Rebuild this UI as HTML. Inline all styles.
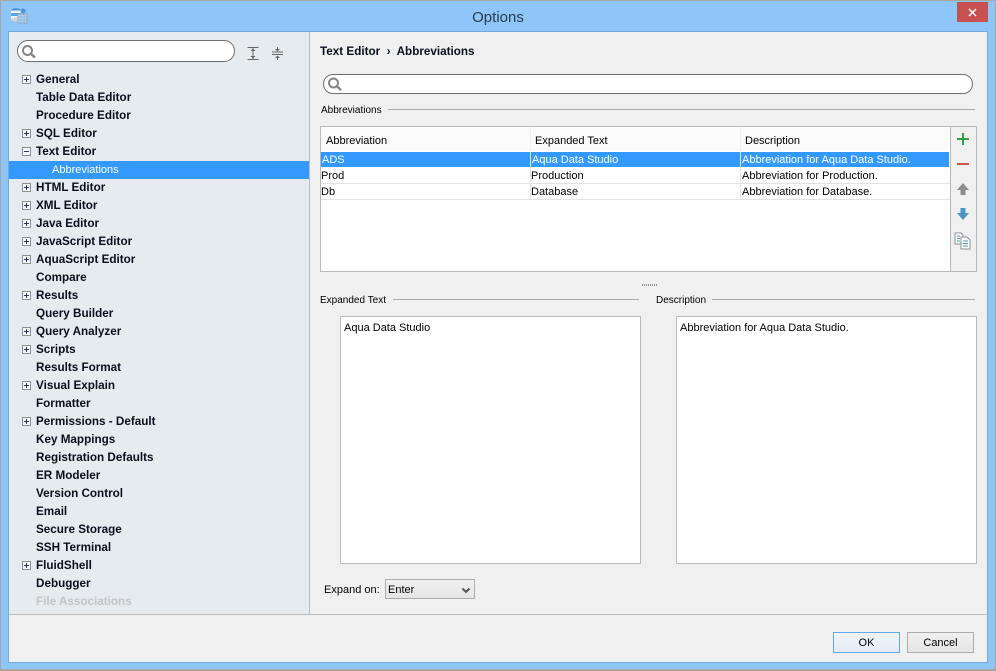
<!DOCTYPE html>
<html><head><meta charset="utf-8"><title>Options</title>
<style>
html,body{margin:0;padding:0;width:996px;height:671px;overflow:hidden;background:#8fc6f9;font-family:"Liberation Sans",sans-serif;font-size:11px;color:#000}
div,span,svg{position:absolute;box-sizing:border-box}
.t{white-space:nowrap;line-height:16px;height:16px;margin-top:1px}
.b{font-weight:bold;left:36px;font-size:11.7px;color:#07101c}
.bx{left:22px;width:9px;height:9px;border:1px solid #8a8f96;background:#f4f6f8}
.bx:before{content:"";position:absolute;left:1px;top:3px;width:5px;height:1px;background:#2a3a66}
.bx.p:after{content:"";position:absolute;left:3px;top:1px;width:1px;height:5px;background:#2a3a66}
.line{height:1px;background:#a8a8a8}
.ta{background:#fff;border:1px solid #b9b9b9}
</style></head><body>
<div style="left:0;top:0;width:996px;height:671px;border:1px solid #a5a5a5;border-bottom-width:2px"></div>
<svg style="left:10px;top:7px" width="18" height="18" viewBox="0 0 18 18"><ellipse cx="6" cy="3.5" rx="5" ry="2.2" fill="#3d8fd8"/><rect x="1" y="3.5" width="10" height="9" fill="#f2f6fa"/><rect x="1" y="6" width="10" height="3" fill="#5aa6e6"/><ellipse cx="6" cy="12.5" rx="5" ry="2" fill="#cfd8e0"/><circle cx="13" cy="4" r="2.5" fill="#4a96dc"/><rect x="8" y="7" width="9" height="9" fill="#b9d4ea" stroke="#8fa4b4"/><path d="M8 10h9M8 13h9M11 7v9M14 7v9" stroke="#7fb2dc" stroke-width=".7"/></svg>
<div class="t" style="left:0;top:8px;width:996px;text-align:center;font-size:15px;line-height:18px;height:18px;color:#2b3a4a">Options</div>
<div style="left:957px;top:2px;width:31px;height:20px;background:#c75050"></div>
<svg style="left:968px;top:8px" width="9" height="9" viewBox="0 0 9 9"><path d="M1 1l7 7M8 1l-7 7" stroke="#fff" stroke-width="1.5"/></svg>

<div style="left:8px;top:31px;width:980px;height:632px;background:#f0f0f0;border:1px solid #74a9da"></div>
<div style="left:9px;top:32px;width:301px;height:583px;background:#e6ebf0;border-right:1px solid #bcbcbc"></div>
<div class="line" style="left:9px;top:614px;width:978px;background:#bcbcbc"></div>

<div style="left:17px;top:40px;width:218px;height:22px;background:#fff;border:1px solid #6e6e6e;border-radius:11px"></div>
<svg style="left:21px;top:44px" width="15" height="15" viewBox="0 0 15 15"><circle cx="6.500" cy="6.500" r="4.500" fill="none" stroke="#858585" stroke-width="2"/><path d="M9.500 9.500l4.500 4" stroke="#858585" stroke-width="2.400"/></svg>
<svg style="left:246px;top:46px" width="14" height="15" viewBox="0 0 14 15"><path d="M1.500 1.500h11M1.500 13.500h11M7 2v11" stroke="#666" stroke-width="1" fill="none"/><path d="M4.500 5L7 2.500 9.500 5zM4.500 10L7 12.500 9.500 10z" fill="#666"/></svg>
<svg style="left:271px;top:46px" width="14" height="15" viewBox="0 0 14 15"><path d="M1 6h11M1 8.500h11M6.500 1v4M6.500 10v4" stroke="#666" stroke-width="1" fill="none"/><path d="M4 3l2.500 2.500L9 3zM4 12l2.500-2.500L9 12z" fill="#666"/></svg>

<div style="left:9px;top:161px;width:300px;height:18px;background:#3399ff"></div>

<div class="bx p" style="top:75px"></div><div class="t b" style="top:71px">General</div>
<div class="t b" style="top:89px">Table Data Editor</div>
<div class="t b" style="top:107px">Procedure Editor</div>
<div class="bx p" style="top:129px"></div><div class="t b" style="top:125px">SQL Editor</div>
<div class="bx" style="top:147px"></div><div class="t b" style="top:143px">Text Editor</div>
<div class="t" style="left:52px;top:161px;color:#fff">Abbreviations</div>
<div class="bx p" style="top:183px"></div><div class="t b" style="top:179px">HTML Editor</div>
<div class="bx p" style="top:201px"></div><div class="t b" style="top:197px">XML Editor</div>
<div class="bx p" style="top:219px"></div><div class="t b" style="top:215px">Java Editor</div>
<div class="bx p" style="top:237px"></div><div class="t b" style="top:233px">JavaScript Editor</div>
<div class="bx p" style="top:255px"></div><div class="t b" style="top:251px">AquaScript Editor</div>
<div class="t b" style="top:269px">Compare</div>
<div class="bx p" style="top:291px"></div><div class="t b" style="top:287px">Results</div>
<div class="t b" style="top:305px">Query Builder</div>
<div class="bx p" style="top:327px"></div><div class="t b" style="top:323px">Query Analyzer</div>
<div class="bx p" style="top:345px"></div><div class="t b" style="top:341px">Scripts</div>
<div class="t b" style="top:359px">Results Format</div>
<div class="bx p" style="top:381px"></div><div class="t b" style="top:377px">Visual Explain</div>
<div class="t b" style="top:395px">Formatter</div>
<div class="bx p" style="top:417px"></div><div class="t b" style="top:413px">Permissions - Default</div>
<div class="t b" style="top:431px">Key Mappings</div>
<div class="t b" style="top:449px">Registration Defaults</div>
<div class="t b" style="top:467px">ER Modeler</div>
<div class="t b" style="top:485px">Version Control</div>
<div class="t b" style="top:503px">Email</div>
<div class="t b" style="top:521px">Secure Storage</div>
<div class="t b" style="top:539px">SSH Terminal</div>
<div class="bx p" style="top:561px"></div><div class="t b" style="top:557px">FluidShell</div>
<div class="t b" style="top:575px">Debugger</div>
<div class="t b" style="top:593px;color:#c2c4c6">File Associations</div>

<div class="t b" style="left:320px;top:43px">Text Editor&nbsp; ›&nbsp; Abbreviations</div>
<div style="left:323px;top:74px;width:650px;height:20px;background:#fff;border:1px solid #6e6e6e;border-radius:10px"></div>
<svg style="left:327px;top:77px" width="15" height="15" viewBox="0 0 15 15"><circle cx="6.500" cy="6" r="4.500" fill="none" stroke="#858585" stroke-width="2"/><path d="M9.500 9l4.500 4" stroke="#858585" stroke-width="2.400"/></svg>
<div class="t" style="left:321px;top:102px;font-size:10px">Abbreviations</div>
<div class="line" style="left:388px;top:109px;width:587px"></div>

<div style="left:320px;top:126px;width:657px;height:146px;background:#fff;border:1px solid #b9b9b9"></div>
<div style="left:950px;top:127px;width:26px;height:144px;background:#f0f0f0;border-left:1px solid #b9b9b9"></div>
<div style="left:321px;top:127px;width:628px;height:24px;background:#fbfbfb"></div>
<div style="left:530px;top:127px;width:1px;height:24px;background:#eef0f2"></div>
<div style="left:740px;top:127px;width:1px;height:24px;background:#eef0f2"></div>
<div class="t" style="left:326px;top:132px">Abbreviation</div>
<div class="t" style="left:535px;top:132px">Expanded Text</div>
<div class="t" style="left:745px;top:132px">Description</div>

<div style="left:321px;top:152px;width:628px;height:15px;background:#3399ff"></div>
<div class="line" style="left:321px;top:183px;width:629px;background:#e2e2e2"></div>
<div class="line" style="left:321px;top:199px;width:629px;background:#e2e2e2"></div>
<div style="left:530px;top:152px;width:1px;height:48px;background:#e2e2e2"></div>
<div style="left:740px;top:152px;width:1px;height:48px;background:#e2e2e2"></div>
<div class="t" style="left:322px;top:151px;color:#fff">ADS</div>
<div class="t" style="left:532px;top:151px;color:#fff">Aqua Data Studio</div>
<div class="t" style="left:742px;top:151px;color:#fff">Abbreviation for Aqua Data Studio.</div>
<div class="t" style="left:321px;top:167px">Prod</div>
<div class="t" style="left:531px;top:167px">Production</div>
<div class="t" style="left:742px;top:167px">Abbreviation for Production.</div>
<div class="t" style="left:321px;top:183px">Db</div>
<div class="t" style="left:531px;top:183px">Database</div>
<div class="t" style="left:742px;top:183px">Abbreviation for Database.</div>

<svg style="left:951px;top:127px" width="25" height="125" viewBox="0 0 25 125">
<path d="M12 6v12M6 12h12" stroke="#2ea043" stroke-width="2" fill="none"/>
<path d="M6 37h12" stroke="#c9574b" stroke-width="2" fill="none"/>
<path d="M12 56l6 7h-3.500v5h-5v-5h-3.500z" fill="#8c8c8c"/>
<path d="M12 93l6-7h-3.500v-5h-5v5h-3.500z" fill="#4a96c4"/>
<path d="M4 106h6l2 2v9H4z" fill="#fff" stroke="#8a8f96"/>
<path d="M10 110h6l3 3v9h-9z" fill="#fff" stroke="#8a8f96"/>
<path d="M12 114h5M12 116.500h5M12 119h5M6 109h3M6 111.500h3M6 114h3" stroke="#4a8fc0" stroke-width="1"/>
</svg>

<svg style="left:642px;top:284px" width="16" height="2" viewBox="0 0 16 2"><path d="M0 1h15" stroke="#909090" stroke-width="2" stroke-dasharray="1 1"/></svg>

<div class="t" style="left:320px;top:292px;font-size:10px">Expanded Text</div>
<div class="line" style="left:393px;top:299px;width:246px"></div>
<div class="t" style="left:656px;top:292px;font-size:10px">Description</div>
<div class="line" style="left:712px;top:299px;width:263px"></div>
<div class="ta" style="left:340px;top:316px;width:301px;height:248px"></div>
<div class="ta" style="left:676px;top:316px;width:301px;height:248px"></div>
<div class="t" style="left:344px;top:319px">Aqua Data Studio</div>
<div class="t" style="left:680px;top:319px">Abbreviation for Aqua Data Studio.</div>

<div class="t" style="left:324px;top:581px">Expand on:</div>
<div style="left:385px;top:579px;width:90px;height:20px;border:1px solid #acacac;background:linear-gradient(#f0f0f0,#e5e5e5)"></div>
<div class="t" style="left:388px;top:581px">Enter</div>
<svg style="left:461px;top:587px" width="10" height="8" viewBox="0 0 10 8"><path d="M1.500 1.500L5 5l3.500-3.500" fill="none" stroke="#555" stroke-width="2"/></svg>

<div style="left:833px;top:632px;width:67px;height:21px;border:1px solid #62a8ee;background:linear-gradient(#f0f4f9,#e5ecf5)"></div>
<div class="t" style="left:833px;top:634px;width:67px;text-align:center">OK</div>
<div style="left:907px;top:632px;width:67px;height:21px;border:1px solid #acacac;background:linear-gradient(#f0f0f0,#e5e5e5)"></div>
<div class="t" style="left:907px;top:634px;width:67px;text-align:center">Cancel</div>
</body></html>
